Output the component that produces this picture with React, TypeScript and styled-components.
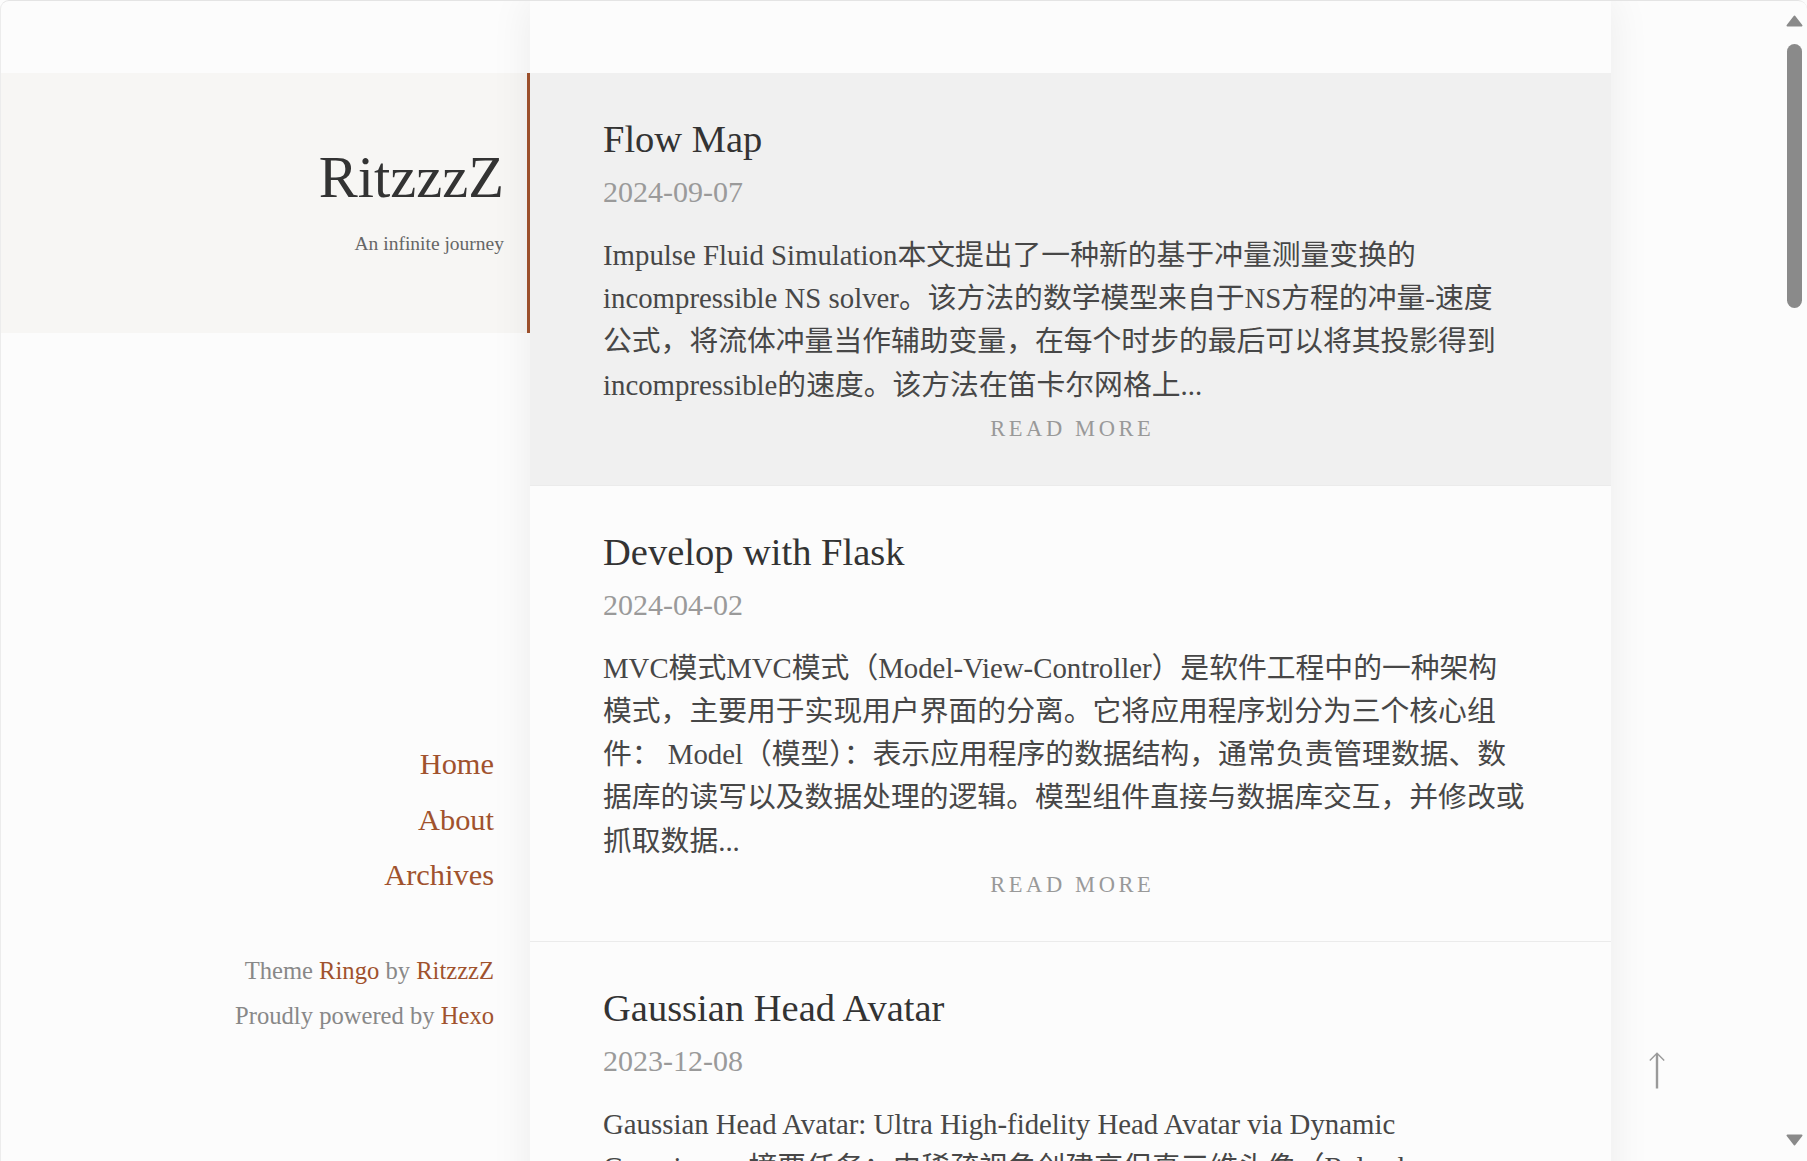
import React from "react";
import styled, { createGlobalStyle } from "styled-components";

const Global = createGlobalStyle`
  html, body {
    margin: 0;
    padding: 0;
    background: #fcfcfc;
  }
  body {
    font-family: "Liberation Serif", "Noto Sans CJK SC", serif;
    color: #333;
  }
`;

const SIENNA = "#a0522d";
const BAR = "#8a8a8a";

const Page = styled.div`
  display: flex;
  align-items: stretch;
  min-height: 4800px; /* the post list runs far below the fold */
`;

const Sidebar = styled.aside`
  flex: 0 0 530px;
  display: flex;
  flex-direction: column;
  padding-top: 73px;
`;

const Header = styled.header`
  box-sizing: border-box;
  width: 530px;
  padding: 70px 23px 75px 0;
  background: #f7f6f4;
  border-right: 3px solid ${SIENNA};
  text-align: right;
`;

const SiteTitle = styled.h1`
  margin: 0;
  font-size: 58.5px;
  line-height: 70px;
  font-weight: normal;
  color: #333;
`;

const Tagline = styled.p`
  margin: 16px 0 0;
  font-size: 19.5px;
  line-height: 29px;
  color: #666;
`;

const Nav = styled.nav`
  margin-top: 404px;
  padding-right: 36px;
  display: flex;
  flex-direction: column;
  align-items: flex-end;
`;

const NavLink = styled.a`
  font-size: 30.4px;
  line-height: 55.5px;
  color: ${SIENNA};
  text-decoration: none;
`;

const Footer = styled.footer`
  margin-top: 44px;
  padding-right: 36px;
  text-align: right;
  font-size: 24.6px;
  line-height: 45px;
  color: #888;
`;

const FootLine = styled.div``;

const FootLink = styled.a`
  color: ${SIENNA};
  text-decoration: none;
`;

const Main = styled.main`
  position: relative;
  z-index: 1;
  flex: 0 0 1081px;
  box-sizing: border-box;
  padding-top: 73px;
  background: #fcfcfc;
  box-shadow: 0 0 40px rgba(0, 0, 0, 0.07);
`;

const Post = styled.article<{ $featured?: boolean }>`
  padding: 38px 73px 41px;
  border-bottom: 1px solid #ebebeb;
  background: ${(p) => (p.$featured ? "#f0f0f0" : "#fcfcfc")};
`;

const PostTitle = styled.h2`
  margin: 0;
  font-size: 38.5px;
  line-height: 57px;
  font-weight: normal;
  color: #333;
`;

const PostDate = styled.div`
  padding-top: 2px;
  font-size: 30px;
  line-height: 43px;
  color: #9a9a9a;
`;

const Excerpt = styled.p`
  margin: 21px 0 0;
  font-size: 28.8px;
  line-height: 43.2px;
  color: #474747;
`;

const ExcerptLine = styled.span`
  display: block;
  white-space: nowrap;
`;

const ReadMore = styled.a`
  display: block;
  margin-top: 7px;
  padding-left: 3.6px;
  text-align: center;
  font-size: 22.5px;
  line-height: 30px;
  letter-spacing: 3.6px;
  color: #999;
  text-decoration: none;
`;

const BackToTop = styled.a`
  position: fixed;
  right: 142px;
  bottom: 72px;
  z-index: 5;
  width: 16px;
  height: 37px;
  display: block;
`;

const WindowFrame = styled.div`
  position: fixed;
  inset: 0;
  z-index: 10;
  pointer-events: none;
  border-top: 1px solid #e4e4e4;
  border-left: 1px solid #ececec;
  border-radius: 9px 9px 0 0;
`;

const ScrollRail = styled.div`
  position: fixed;
  top: 0;
  right: 4px;
  bottom: 0;
  z-index: 11;
  width: 17px;
  display: flex;
  flex-direction: column;
  align-items: center;
  padding: 15px 0 15px;
  box-sizing: border-box;
`;

const RailArrow = styled.svg<{ $bottom?: boolean }>`
  display: block;
  flex: none;
  margin-top: ${(p) => (p.$bottom ? "auto" : "0")};
`;

const Thumb = styled.div`
  margin-top: 17px;
  width: 15px;
  height: 264px;
  border-radius: 8px;
  background: ${BAR};
`;

type PostData = {
  title: string;
  date: string;
  lines: string[];
  featured?: boolean;
  more?: boolean;
};

const posts: PostData[] = [
  {
    title: "Flow Map",
    date: "2024-09-07",
    featured: true,
    more: true,
    lines: [
      "Impulse Fluid Simulation本文提出了一种新的基于冲量测量变换的",
      "incompressible NS solver。该方法的数学模型来自于NS方程的冲量-速度",
      "公式，将流体冲量当作辅助变量，在每个时步的最后可以将其投影得到",
      "incompressible的速度。该方法在笛卡尔网格上...",
    ],
  },
  {
    title: "Develop with Flask",
    date: "2024-04-02",
    more: true,
    lines: [
      "MVC模式MVC模式（Model-View-Controller）是软件工程中的一种架构",
      "模式，主要用于实现用户界面的分离。它将应用程序划分为三个核心组",
      "件： Model（模型）：表示应用程序的数据结构，通常负责管理数据、数",
      "据库的读写以及数据处理的逻辑。模型组件直接与数据库交互，并修改或",
      "抓取数据...",
    ],
  },
  {
    title: "Gaussian Head Avatar",
    date: "2023-12-08",
    more: true,
    lines: [
      "Gaussian Head Avatar: Ultra High-fidelity Head Avatar via Dynamic",
      "Gaussians，摘要任务：由稀疏视角创建高保真三维头像（Relead...",
    ],
  },
];

export default function App() {
  return (
    <>
      <Global />
      <Page>
        <Sidebar>
          <Header>
            <SiteTitle>RitzzzZ</SiteTitle>
            <Tagline>An infinite journey</Tagline>
          </Header>
          <Nav>
            <NavLink href="#">Home</NavLink>
            <NavLink href="#">About</NavLink>
            <NavLink href="#">Archives</NavLink>
          </Nav>
          <Footer>
            <FootLine>
              Theme <FootLink href="#">Ringo</FootLink> by{" "}
              <FootLink href="#">RitzzzZ</FootLink>
            </FootLine>
            <FootLine>
              Proudly powered by <FootLink href="#">Hexo</FootLink>
            </FootLine>
          </Footer>
        </Sidebar>
        <Main>
          {posts.map((p) => (
            <Post key={p.title} $featured={p.featured}>
              <PostTitle>{p.title}</PostTitle>
              <PostDate>{p.date}</PostDate>
              <Excerpt>
                {p.lines.map((l, i) => (
                  <ExcerptLine key={i}>{l}</ExcerptLine>
                ))}
              </Excerpt>
              {p.more && <ReadMore href="#">READ MORE</ReadMore>}
            </Post>
          ))}
        </Main>
      </Page>
      <BackToTop href="#" aria-label="back to top">
        <svg width="16" height="37" viewBox="0 0 16 37" fill="none">
          <path d="M8 36.5V2" stroke="#9a9a9a" strokeWidth="2.4" />
          <path d="M0.8 8.5L8 1.2L15.2 8.5" stroke="#9a9a9a" strokeWidth="1.4" />
        </svg>
      </BackToTop>
      <WindowFrame />
      <ScrollRail>
        <RailArrow width="17" height="12" viewBox="0 0 17 12">
          <polygon
            points="8.5,1.5 15.5,10.5 1.5,10.5"
            fill={BAR}
            stroke={BAR}
            strokeWidth="2"
            strokeLinejoin="round"
          />
        </RailArrow>
        <Thumb />
        <RailArrow $bottom width="17" height="12" viewBox="0 0 17 12">
          <polygon
            points="1.5,1.5 15.5,1.5 8.5,10.5"
            fill={BAR}
            stroke={BAR}
            strokeWidth="2"
            strokeLinejoin="round"
          />
        </RailArrow>
      </ScrollRail>
    </>
  );
}
